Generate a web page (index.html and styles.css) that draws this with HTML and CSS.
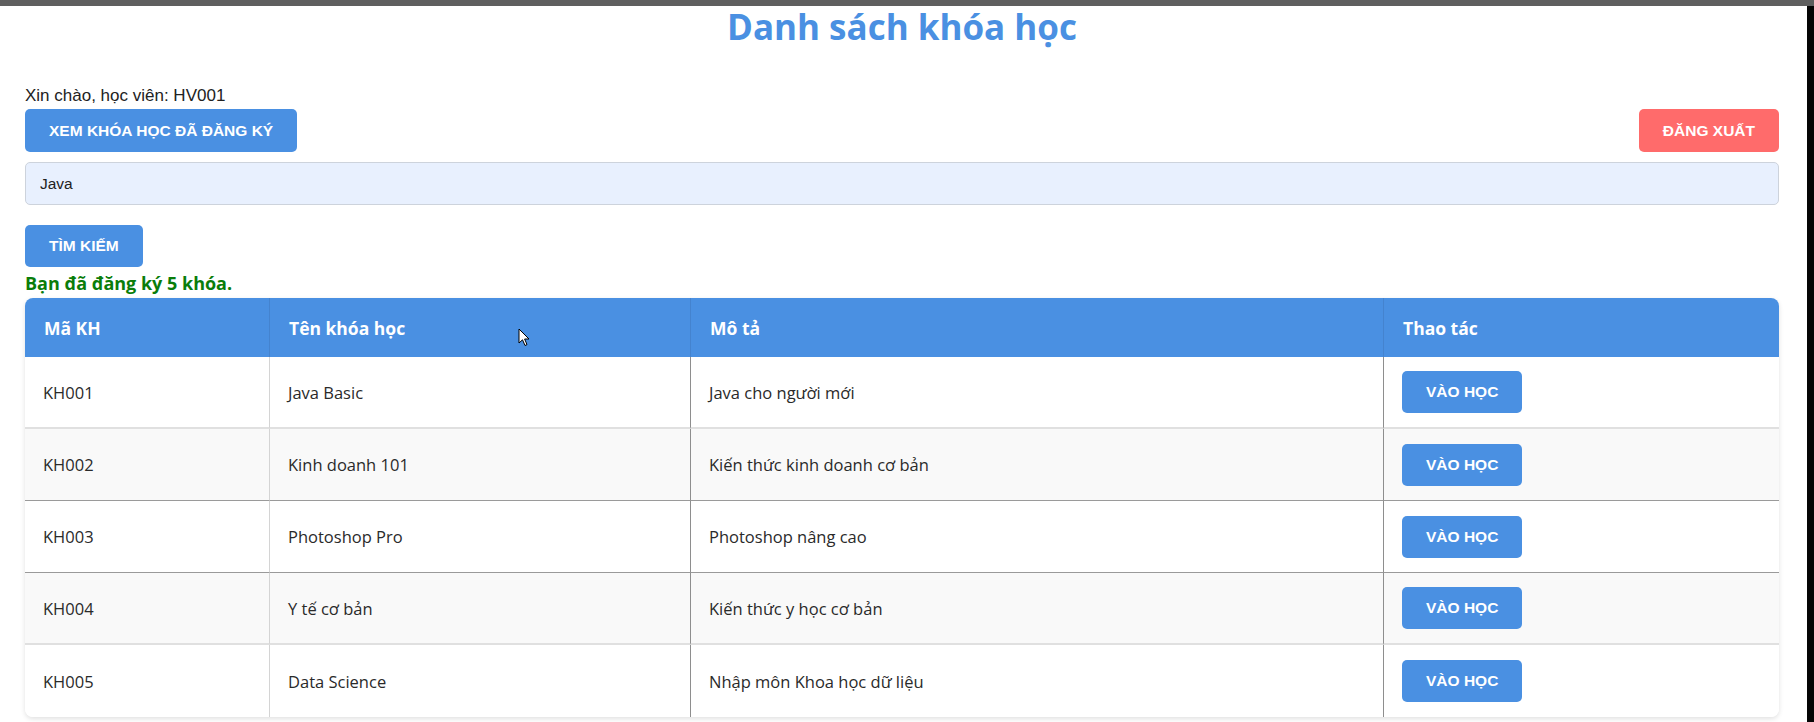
FILE: index.html
```html
<!DOCTYPE html>
<html lang="vi">
<head>
<meta charset="utf-8">
<title>Danh sách khóa học</title>
<link rel="stylesheet" href="styles.css">
</head>
<body>
<div class="topbar"></div>
<div class="frame">
  <main class="page">
    <h1 class="title">Danh sách khóa học</h1>
    <div class="greeting">Xin chào, học viên: HV001</div>
    <div class="actions">
      <button class="btn btn-blue btn-tall">Xem khóa học đã đăng ký</button>
      <button class="btn btn-red btn-tall">Đăng xuất</button>
    </div>
    <input class="search" type="text" value="Java">
    <div class="search-row">
      <button class="btn btn-blue">Tìm kiếm</button>
    </div>
    <div class="notice">Bạn đã đăng ký 5 khóa.</div>
    <div class="table-wrap">
      <table class="courses">
        <colgroup>
          <col class="c1"><col class="c2"><col class="c3"><col class="c4">
        </colgroup>
        <thead>
          <tr><th>Mã KH</th><th>Tên khóa học</th><th>Mô tả</th><th>Thao tác</th></tr>
        </thead>
        <tbody>
          <tr class="r-light"><td>KH001</td><td>Java Basic</td><td>Java cho người mới</td><td><button class="btn btn-blue">Vào học</button></td></tr>
          <tr class="r-alt r-dark"><td>KH002</td><td>Kinh doanh 101</td><td>Kiến thức kinh doanh cơ bản</td><td><button class="btn btn-blue">Vào học</button></td></tr>
          <tr class="r-dark"><td>KH003</td><td>Photoshop Pro</td><td>Photoshop nâng cao</td><td><button class="btn btn-blue">Vào học</button></td></tr>
          <tr class="r-alt r-light"><td>KH004</td><td>Y tế cơ bản</td><td>Kiến thức y học cơ bản</td><td><button class="btn btn-blue">Vào học</button></td></tr>
          <tr class="r-last"><td>KH005</td><td>Data Science</td><td>Nhập môn Khoa học dữ liệu</td><td><button class="btn btn-blue">Vào học</button></td></tr>
        </tbody>
      </table>
    </div>
    <svg class="cursor" width="12" height="19" viewBox="0 0 12 19" aria-hidden="true">
      <path d="M1 1 L1 15 L4.5 11.8 L7 17.5 L9 16.6 L6.6 11 L11 11 Z" fill="#fff" stroke="#000" stroke-width="1" stroke-linejoin="round"/>
    </svg>
  </main>
  <div class="strip"></div>
</div>
</body>
</html>
```
FILE: styles.css
```css
html, body {
  margin: 0;
  padding: 0;
  background: #ffffff;
}
body {
  width: 1814px;
  height: 722px;
  overflow: hidden;
  font-family: "Liberation Sans", Arial, sans-serif;
  color: #222;
}
.topbar {
  height: 6px;
  background: #5f5f5f;
}
.frame {
  display: flex;
  height: 716px;
}
.page {
  position: relative;
  flex: 1;
  padding: 0 28px 0 25px;
  display: flex;
  flex-direction: column;
  align-items: stretch;
}
.strip {
  width: 7px;
  background: #050505;
}
.title {
  margin: 0;
  text-align: center;
  font-family: "Open Sans", "Noto Sans", sans-serif;
  font-weight: 700;
  font-size: 35px;
  line-height: 42px;
  color: #4a90e2;
}
.greeting {
  margin-top: 38px;
  font-size: 17px;
  line-height: 20px;
  color: #222;
}
.actions {
  margin-top: 3px;
  display: flex;
  justify-content: space-between;
  align-items: flex-start;
}
.btn {
  font-family: "Liberation Sans", Arial, sans-serif;
  font-weight: 700;
  font-size: 15.5px;
  line-height: 18px;
  text-transform: uppercase;
  color: #ffffff;
  border: none;
  border-radius: 5px;
  padding: 12px 24px;
  cursor: pointer;
}
.btn-tall { line-height: 19px; }
.btn-blue { background: #4a90e2; }
.btn-red { background: #ff6b6b; }
.search {
  margin: 10px 0 0 0;
  height: 43px;
  box-sizing: border-box;
  border: 1px solid #cdd3dc;
  border-radius: 5px;
  background: #e8f0fe;
  padding: 0 14px;
  font-family: "Liberation Sans", Arial, sans-serif;
  font-size: 15.5px;
  color: #222;
}
.search-row {
  margin-top: 20px;
  display: flex;
}
.notice {
  margin-top: 5px;
  font-family: "Open Sans", "Noto Sans", sans-serif;
  font-weight: 700;
  font-size: 18px;
  line-height: 22px;
  color: #0a7d0a;
}
.table-wrap {
  margin-top: 4px;
  border-radius: 8px;
  overflow: hidden;
  box-shadow: 0 2px 5px rgba(0, 0, 0, 0.12);
}
.courses {
  width: 100%;
  table-layout: fixed;
  border-collapse: separate;
  border-spacing: 0;
  font-family: "Open Sans", "Noto Sans", sans-serif;
}
.c1 { width: 245px; }
.c2 { width: 421px; }
.c3 { width: 693px; }
.courses thead tr { height: 59px; }
.courses th {
  background: #4a90e2;
  color: #ffffff;
  font-weight: 700;
  font-size: 17.5px;
  text-align: left;
  padding: 0 18px 0 19px;
  border-right: 1px solid #4483cf;
}
.courses th:last-child { border-right: none; }
.courses tbody tr { height: 72px; }
.courses td {
  font-size: 16.5px;
  color: #2a2a2a;
  padding: 0 18px;
  background: #ffffff;
  border-right: 1px solid #8e8e8e;
}
.courses td:first-child { border-right-color: #d4d4d4; }
.courses td:last-child { border-right: none; }
.courses tr.r-alt td { background: #f9f9f9; }
.courses tr.r-light td { border-bottom: 2px solid #e0e0e0; }
.courses tr.r-dark td { border-bottom: 1px solid #9a9a9a; }
.cursor {
  position: absolute;
  left: 518px;
  top: 322px;
}
```
